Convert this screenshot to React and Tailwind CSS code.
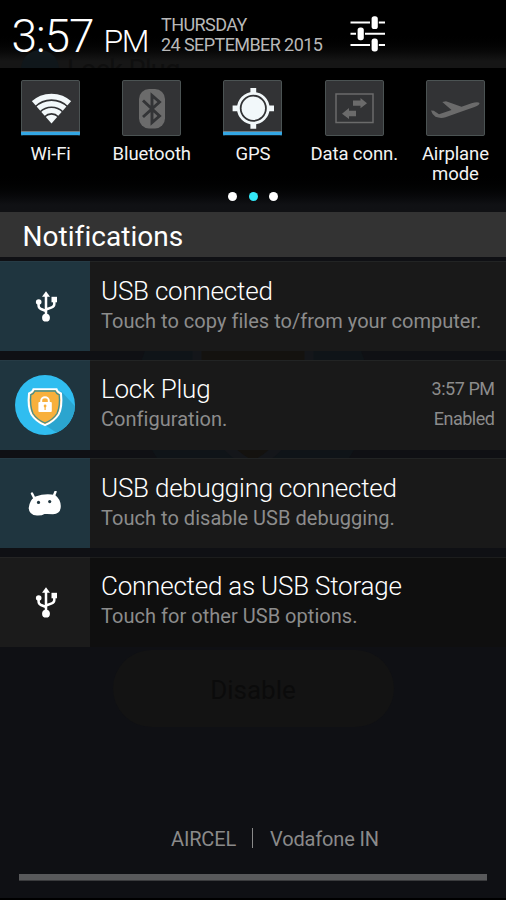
import React from 'react';

const SlidersIcon = () => (
  <svg width="36" height="38" viewBox="0 0 36 38" fill="#fff">
    <path d="M.5 6.600h19.500v2H.5zM28.800 6.600h6.200v2h-6.200zM.5 17.800h5.500v2H.5zM15 17.800h20v2H15zM.5 29h19.500v2H.5zM28.800 29h6.200v2h-6.200z" />
    <rect x="21.600" y="1.200" width="6.200" height="12.800" rx="2.600" />
    <rect x="7.600" y="12.400" width="6.200" height="12.800" rx="2.600" />
    <rect x="21.600" y="23.600" width="6.200" height="12.800" rx="2.600" />
  </svg>
);

const WifiIcon = () => (
  <svg width="59" height="56" viewBox="0 0 59 56" fill="none" stroke="#f2f8fa">
    <clipPath id="wifi-fan">
      <path d="M30.500 43.500L10.300 20.500Q18 13 30.500 13T50.700 20.500z" />
    </clipPath>
    <g clipPath="url(#wifi-fan)">
      <circle cx="30.500" cy="43.500" r="27" strokeWidth="5.600" />
      <circle cx="30.500" cy="43.500" r="19.800" strokeWidth="5.400" />
      <circle cx="30.500" cy="43.500" r="12.900" strokeWidth="5" />
      <circle cx="30.500" cy="43.500" r="4.400" strokeWidth="8.800" />
    </g>
  </svg>
);

const BluetoothIcon = () => (
  <svg width="59" height="56" viewBox="0 0 59 56" fill="none">
    <rect x="17" y="9" width="26" height="39.500" rx="10" fill="#6b6b6b" />
    <path d="M21 20.500L37.500 36L30 42.500V15.500L37.500 22L21 37" stroke="#333436" strokeWidth="2.900" />
  </svg>
);

const GpsIcon = () => (
  <svg width="59" height="56" viewBox="0 0 59 56" fill="none" stroke="#f2f8fa">
    <circle cx="30.300" cy="28.300" r="14.900" strokeWidth="2.800" />
    <circle cx="30.300" cy="28.300" r="11.700" fill="#f2f8fa" stroke="none" />
    <path d="M30.300 8v6M30.300 42.700v6M9.600 28.300h6M45 28.300h6" strokeWidth="5.800" />
  </svg>
);

const DataIcon = () => (
  <svg width="59" height="56" viewBox="0 0 59 56" fill="#6b6b6b">
    <rect x="11" y="14" width="37" height="28.500" fill="none" stroke="#6b6b6b" strokeWidth="1.500" />
    <path d="M28 20.500h7.500v-2.600l6.500 5.300l-6.500 5.100v-2.600h-7.500z" />
    <path d="M31 30.800h-7v-2.700l-7 5.600l7 5.300v-2.700h7z" />
  </svg>
);

const AirplaneIcon = () => (
  <svg width="59" height="56" viewBox="0 0 59 56" fill="#6b6b6b">
    <path d="M5 30.500L7.800 30.800L13 34.200L25.500 30L16.300 22L20 21.300L35.500 26.800L45.500 23.200Q52 21.200 53.500 23Q53.900 25.200 48.500 27L33.500 32.300L19.500 37.300Q14.500 38.800 9.500 36.800Q6.300 35 5 30.500z" />
  </svg>
);

const UsbIcon = () => (
  <svg className="ml-[2px]" width="22" height="31" viewBox="0 0 22 31" fill="#fff">
    <path d="M11 4v22M11 20l-5-2Q3.600 16.900 3.600 14.500V11.500M11 18.500l5.800-2.200Q19.300 15.300 19.300 13V10" fill="none" stroke="#fff" strokeWidth="2.500" />
    <path d="M11 .3l4 5.500H7z" />
    <circle cx="3.700" cy="11" r="2.800" />
    <rect x="16.500" y="5.800" width="5.500" height="5.500" />
    <circle cx="11" cy="26.700" r="3.900" />
  </svg>
);

const AndroidIcon = () => (
  <svg width="34" height="26" viewBox="0 0 34 26">
    <path d="M4 2.500l2.500 5M27.500 .8l-2 5" stroke="#fff" strokeWidth="2.400" strokeLinecap="round" />
    <path d="M7.500 5.500Q17 2 27 4Q32.500 8 32.800 15Q32.800 23 25 23.200Q20 22.800 16.500 23Q14 24.800 9 24.600Q1 24 .7 17Q1.500 9 7.500 5.500z" fill="#fff" />
    <circle cx="10.500" cy="11.400" r="1.600" fill="#1f353f" />
    <circle cx="21.700" cy="10.600" r="1.600" fill="#1f353f" />
  </svg>
);

const LockPlugIcon = () => (
  <svg width="60" height="60" viewBox="0 0 60 60">
    <clipPath id="lock-disc">
      <circle cx="30" cy="30" r="30" />
    </clipPath>
    <circle cx="30" cy="30" r="30" fill="#30bdf0" />
    <path d="M46 16L70 42L54 66L30 50z" fill="#2ba5cf" clipPath="url(#lock-disc)" />
    <path d="M18.500 14.300H41.500Q42 17 46 18.500Q47.500 32 43.500 39.500Q39 46.500 30 50.200Q21 46.500 16.500 39.500Q12.500 32 14 18.500Q18 17 18.500 14.300z" fill="#f8b03c" stroke="#fff" strokeWidth="2" />
    <path d="M19.900 16H40.100Q41 18.500 44.200 19.800Q45.300 31.500 42 38.500Q38 44.600 30 48Q22 44.600 18 38.500Q14.700 31.500 15.800 19.800Q19 18.500 19.900 16z" fill="none" stroke="#3f8f94" strokeWidth="1.300" />
    <rect x="23.400" y="27" width="13.400" height="10" rx="1" fill="#fff" />
    <path d="M26.200 27.500v-1.800a3.800 3.400 0 0 1 7.600 0v1.800" fill="none" stroke="#fff" strokeWidth="2" />
    <circle cx="30.100" cy="31" r="1.400" fill="#f8b03c" />
    <path d="M29.500 31h1.200v4h-1.200z" fill="#f8b03c" />
  </svg>
);

// Dimmed app screen that shows through between the notifications
const DimmedApp = () => (
  <svg className="absolute left-0 top-0" width="506" height="900" viewBox="0 0 506 900">
    <circle cx="253" cy="393" r="116" fill="#0f1418" />
    <path d="M197 320h112v60q-8 60-56 86q-48-26-56-86z" fill="#14120f" stroke="#14161a" strokeWidth="9" />
  </svg>
);

const toggles = [
  { label: 'Wi-Fi', icon: <WifiIcon />, on: true },
  { label: 'Bluetooth', icon: <BluetoothIcon />, on: false },
  { label: 'GPS', icon: <GpsIcon />, on: true },
  { label: 'Data conn.', icon: <DataIcon />, on: false },
  { label: 'Airplane mode', icon: <AirplaneIcon />, on: false },
];

const notifications = [
  { title: 'USB connected', text: 'Touch to copy files to/from your computer.', icon: <UsbIcon /> },
  { title: 'Lock Plug', text: 'Configuration.', icon: <LockPlugIcon />, time: '3:57 PM', info: 'Enabled' },
  { title: 'USB debugging connected', text: 'Touch to disable USB debugging.', icon: <AndroidIcon /> },
  { title: 'Connected as USB Storage', text: 'Touch for other USB options.', icon: <UsbIcon />, dark: true },
];

const Toggle = ({ label, icon, on }) => (
  <div className="flex flex-col items-center">
    <div className="relative w-[59px] h-[56px] bg-[#323335] rounded-xs overflow-hidden">
      {icon}
      <div className="absolute inset-0 border border-[#4b5353] rounded-xs" />
      {on && <div className="absolute inset-x-0 bottom-0 h-[5px] bg-[#33a7e4] border-t border-t-[#6b7c84] border-b border-b-[#14242c]" />}
    </div>
    <p className="mt-[8.4px] w-[100px] text-center text-[18.5px] leading-5 -tracking-[0.1px] text-[#f3f3f3]">{label}</p>
  </div>
);

const Notification = ({ title, text, icon, time, info, dark }) => (
  <div className="flex h-[90px]">
    <div className={`w-[90px] flex items-center justify-center border-t ${dark ? 'bg-[#1b1b1b] border-[#242424]' : 'bg-[#1f353f] border-[#263b45]'}`}>
      {icon}
    </div>
    <div className={`flex-1 flex justify-between pl-[11px] pr-[11.5px] pt-[13.5px] border-t whitespace-nowrap ${dark ? 'bg-[#0f0f0f] border-[#1c1d1d]' : 'bg-[#191919] border-[#222424]'}`}>
      <div>
        <h3 className="text-[26px] leading-[30px] font-light -tracking-[0.22px] text-white">{title}</h3>
        <p className="mt-[0.3px] text-[20px] leading-[30px] tracking-[0.03px] text-[#8c8c8c]">{text}</p>
      </div>
      {time && (
        <div className="text-right text-[18px] leading-[30px] -tracking-[0.48px] text-[#8c8c8c]">
          <p>{time}</p>
          <p>{info}</p>
        </div>
      )}
    </div>
  </div>
);

const App = () => {
  return (
    <div className="relative w-[506px] h-[900px] overflow-hidden bg-[#0f1014] font-['Roboto',sans-serif]">
      <DimmedApp />
      <div className="relative h-full flex flex-col">
        {/* Clock and date */}
        <header className="relative h-[68px] shrink-0 flex bg-linear-to-b from-black from-45% to-[#161616] to-90% overflow-hidden">
          <div className="absolute left-[21px] top-[50px] w-[38px] h-[38px] rounded-full bg-[#10171b]" />
          <p className="absolute left-[67px] top-[54px] text-[27px] leading-[32px] -tracking-[0.6px] text-[#0f0f0f]">Lock Plug</p>
          <div className="relative w-[161px] pl-[11.5px] text-[46px] leading-[72px] font-light -tracking-[1.1px] text-white whitespace-nowrap">
            3:57 <span className="text-[32px] leading-none -tracking-[1.3px]">PM</span>
          </div>
          <div className="relative w-[188px] pt-[15px] text-[18px] leading-[19.5px] -tracking-[0.58px] text-[#b8b8b8] whitespace-nowrap">
            <p>THURSDAY</p>
            <p>24 SEPTEMBER 2015</p>
          </div>
          <div className="relative pt-[15px] pl-[1px]">
            <SlidersIcon />
          </div>
        </header>

        {/* Quick settings */}
        <section className="h-36 shrink-0 pt-3 bg-linear-to-b from-black from-70% to-[#101114] to-95%">
          <div className="grid grid-cols-5 h-[112px]">
            {toggles.map((t) => (
              <Toggle key={t.label} {...t} />
            ))}
          </div>
          <div className="flex justify-center gap-[11.5px]">
            <span className="w-[9px] h-[9px] rounded-full bg-white" />
            <span className="w-[9px] h-[9px] rounded-full bg-[#33e8f7]" />
            <span className="w-[9px] h-[9px] rounded-full bg-white" />
          </div>
        </section>

        <h2 className="h-[45px] shrink-0 pl-[22.5px] bg-[#333] text-[28px] leading-[50px] tracking-[0.05px] text-white">Notifications</h2>

        <div className="mt-1 flex flex-col gap-[8.5px]">
          {notifications.map((n) => (
            <Notification key={n.title} {...n} />
          ))}
        </div>

        <div className="mt-[3px] mx-auto w-[281px] h-[77px] rounded-full bg-[#131313] text-center text-[26px] leading-[80px] text-[#0b0b0b]">
          Disable
        </div>

        {/* Carriers */}
        <footer className="mt-auto h-[72px] pl-[171px] flex items-start text-[20px] leading-[22px] -tracking-[0.15px] text-[#8a8a8a] whitespace-nowrap">
          <span className="w-[81px]">AIRCEL</span>
          <span className="w-px h-5 bg-[#8a8a8a]" />
          <span className="pl-[17px]">Vodafone IN</span>
        </footer>
        <div className="absolute left-[19px] right-[19px] bottom-[19px] h-[7px] bg-[#58595b] border-b border-[#3a3b3d]" />
        <div className="absolute inset-x-0 bottom-0 h-[2px] bg-black" />
      </div>
    </div>
  );
};

export default App;
